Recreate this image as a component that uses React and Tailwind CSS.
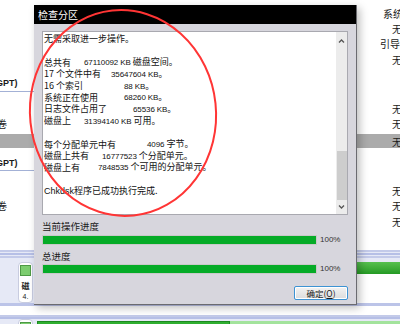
import clsx from "clsx";

function Row({ className = "", left, right, leftClass = "" }) {
  return (
    <div className={clsx("flex", className)}>
      <div
        className={clsx(
          "w-[34px] flex items-center overflow-hidden whitespace-nowrap",
          leftClass
        )}
      >
        {left}
      </div>
      <div className="flex-1" />
      <div className="w-[43px] flex items-center overflow-hidden whitespace-nowrap">
        {right}
      </div>
    </div>
  );
}

const N = ({ children }) => (
  <span className="font-['Liberation_Sans',sans-serif] text-[8px] tracking-[-0.1px]">
    {children}
  </span>
);

function Line({ label, w, children }) {
  return (
    <div className="flex h-[11.7px] items-center whitespace-nowrap">
      <span className={clsx("inline-block shrink-0", w)}>{label}</span>
      <span>{children}</span>
    </div>
  );
}

function ProgressRow() {
  return (
    <div className="flex items-center">
      <div className="w-[275px] h-[10px] border border-[#c9c9c9] bg-[#05ab27]" />
      <span className="ml-[3px] font-['Liberation_Sans',sans-serif] text-[8px] text-[#333]">
        100%
      </span>
    </div>
  );
}

export default function App() {
  const wu = <span className="pl-[35px] text-[10px]">无</span>;
  return (
    <div className="relative w-[400px] h-[324px] overflow-hidden bg-white text-[#1a1a1a] font-['Noto_Sans_CJK_SC','Liberation_Sans',sans-serif]">
      {/* disk management window behind the dialog */}
      <div className="flex flex-col text-[10px]">
        <div className="h-[6px]" />
        <Row className="h-[14px]" right={<span className="pl-[26px]">系统分区</span>} />
        <Row className="h-[16px]" right={wu} />
        <Row className="h-[15px]" right={<span className="pl-[23px]">引导分区</span>} />
        <Row className="h-[17px]" right={wu} />
        <div className="h-[8px]" />
        <Row
          className="h-[16px]"
          leftClass="border-b border-[#a3b1d6]"
          left={<span className="ml-[-4px] font-bold text-[9px] font-['Liberation_Sans',sans-serif]">GPT)</span>}
        />
        <div className="h-[8px]" />
        <Row className="h-[16px]" right={wu} />
        <Row className="h-[15px]" left={<span className="ml-[-3px]">卷</span>} right={wu} />
        <div className="h-[3px]" />
        <Row className="h-[14px] bg-[#ababab]" right={wu} />
        <div className="h-[10px]" />
        <Row
          className="h-[13px]"
          leftClass="border-b border-[#a3b1d6]"
          left={<span className="ml-[-4px] font-bold text-[9px] font-['Liberation_Sans',sans-serif]">GPT)</span>}
        />
        <div className="h-[11px]" />
        <Row className="h-[16px]" right={wu} />
        <Row className="h-[15px]" left={<span className="ml-[-3px]">卷</span>} right={wu} />
        <Row className="h-[16px]" right={wu} />
        <div className="h-[21px]" />

        {/* graphical disk area */}
        <div className="h-[12px] flex flex-col bg-[#e6e9f6]">
          <div className="h-[2px] bg-[#c3cae9]" />
          <div className="h-[1px]" />
          <div className="h-[2px] bg-[#b6bfe6]" />
          <div className="h-[1px]" />
          <div className="h-[2px] bg-[#c3cae9]" />
        </div>
        <div className="h-[41px] flex bg-[#e6e9f6]">
          <div className="ml-[18px] w-[15px] h-[41px] rounded-[4px] border border-[#c8cce0] bg-white flex flex-col items-center pt-[2px]">
            <div className="w-[11px] h-[11px] bg-[#7ccd6f] border border-[#4d9a45]" />
            <span className="mt-[4px] text-[8px] font-bold">磁</span>
            <span className="text-[7px] font-['Liberation_Sans',sans-serif]">4.</span>
          </div>
          <div className="ml-[4px] flex-1 flex flex-col bg-white border-l border-[#c8cce0]">
            <div className="h-[12px] bg-gradient-to-b from-[#56c04f] to-[#239a23]" />
          </div>
        </div>
        <div className="h-[3px] bg-[#bcc4e8]" />
        <div className="h-[9px] bg-white" />
        <div className="h-[4px] flex flex-col">
          <div className="h-[2px] bg-[#c3cae9]" />
          <div className="h-[2px] bg-[#b6bfe6]" />
        </div>
        <div className="h-[8px] flex bg-[#e6e9f6]">
          <div className="ml-[18px] w-[15px] h-[12px] rounded-t-[4px] border border-[#c8cce0] bg-white flex justify-center pt-[2px]">
            <div className="w-[11px] h-[11px] bg-[#7ccd6f] border border-[#4d9a45]" />
          </div>
          <div className="ml-[4px] flex-1 flex mt-[2px]">
            <div className="w-[193px] bg-[#2fae31] border border-[#1c8a1f]" />
            <div className="flex-1 bg-[#a3e39c]" />
          </div>
        </div>
      </div>

      {/* dialog */}
      <div className="absolute left-[34px] top-[5px] w-[323px] h-[300px] flex flex-col bg-[#d7d6dd] border-r border-b border-[#6b6b70] shadow-[3px_3px_8px_rgba(0,0,0,0.25)]">
        <div className="h-[19px] bg-black text-white text-[10px] flex items-center pl-[4px]">
          检查分区
        </div>
        <div className="flex flex-col px-[8px] pt-[7px]">
          <div className="relative h-[184px] bg-white border border-[#a9a9b0] text-[9px] text-[#111] leading-none">
            <div className="pl-[1px] pt-[1px]">
              <Line label="无需采取进一步操作。" w="" />
              <div className="h-[11.7px]" />
              <Line label="总共有" w="w-[40px]">
                <N>67110092 KB</N> 磁盘空间。
              </Line>
              <Line label="17 个文件中有" w="w-[67px]">
                <N>35647604 KB</N>。
              </Line>
              <Line label="16 个索引" w="w-[80px]">
                <N>88 KB</N>。
              </Line>
              <Line label="系统正在使用" w="w-[80px]">
                <N>68260 KB</N>。
              </Line>
              <Line label="日志文件占用了" w="w-[89px]">
                <N>65536 KB</N>。
              </Line>
              <Line label="磁盘上" w="w-[40px]">
                <N>31394140 KB</N> 可用。
              </Line>
              <div className="h-[11.7px]" />
              <Line label="每个分配单元中有" w="w-[103px]">
                <N>4096</N> 字节。
              </Line>
              <Line label="磁盘上共有" w="w-[58px]">
                <N>16777523</N> 个分配单元。
              </Line>
              <Line label="磁盘上有" w="w-[54px]">
                <N>7848535</N> 个可用的分配单元。
              </Line>
              <div className="h-[11.7px]" />
              <Line label="" w="">
                <span className="font-['Liberation_Sans',sans-serif] text-[9px]">Chkdsk</span>
                程序已成功执行完成.
              </Line>
            </div>
            {/* scrollbar */}
            <div className="absolute right-0 top-0 bottom-0 w-[11px] bg-[#ececec] flex flex-col items-center">
              <svg width="9" height="12" viewBox="0 0 9 12" className="mt-[3px]">
                <path d="M2 7.5 L4.5 5 L7 7.5" fill="none" stroke="#555" strokeWidth="1.3" />
              </svg>
              <div className="mt-[104px] w-[10px] h-[49px] bg-[#cdcdcd]" />
              <svg width="9" height="12" viewBox="0 0 9 12" className="mt-[1px]">
                <path d="M2 4.5 L4.5 7 L7 4.5" fill="none" stroke="#555" strokeWidth="1.3" />
              </svg>
            </div>
          </div>
          <div className="h-[14px] mt-[4px] flex items-center text-[9.5px]">当前操作进度</div>
          <div className="mt-[1px]">
            <ProgressRow />
          </div>
          <div className="h-[14px] mt-[3px] flex items-center text-[9.5px]">总进度</div>
          <div className="mt-[0px]">
            <ProgressRow />
          </div>
          <div className="flex justify-end mt-[11px]">
            <button className="w-[54px] h-[14px] rounded-[2px] border border-[#3d93d3] bg-gradient-to-b from-[#f3f3f3] to-[#dcdcdc] shadow-[inset_0_0_0_1px_#ffffff] text-[8.5px] leading-none flex items-center justify-center">
              确定(<span className="underline">O</span>)
            </button>
          </div>
        </div>
      </div>

      {/* red annotation ellipse */}
      <svg className="absolute left-0 top-0" width="400" height="324" viewBox="0 0 400 324">
        <ellipse
          cx="123"
          cy="113"
          rx="93"
          ry="103"
          transform="rotate(-6 123 113)"
          fill="none"
          stroke="#ff3535"
          strokeWidth="2"
        />
      </svg>
    </div>
  );
}
